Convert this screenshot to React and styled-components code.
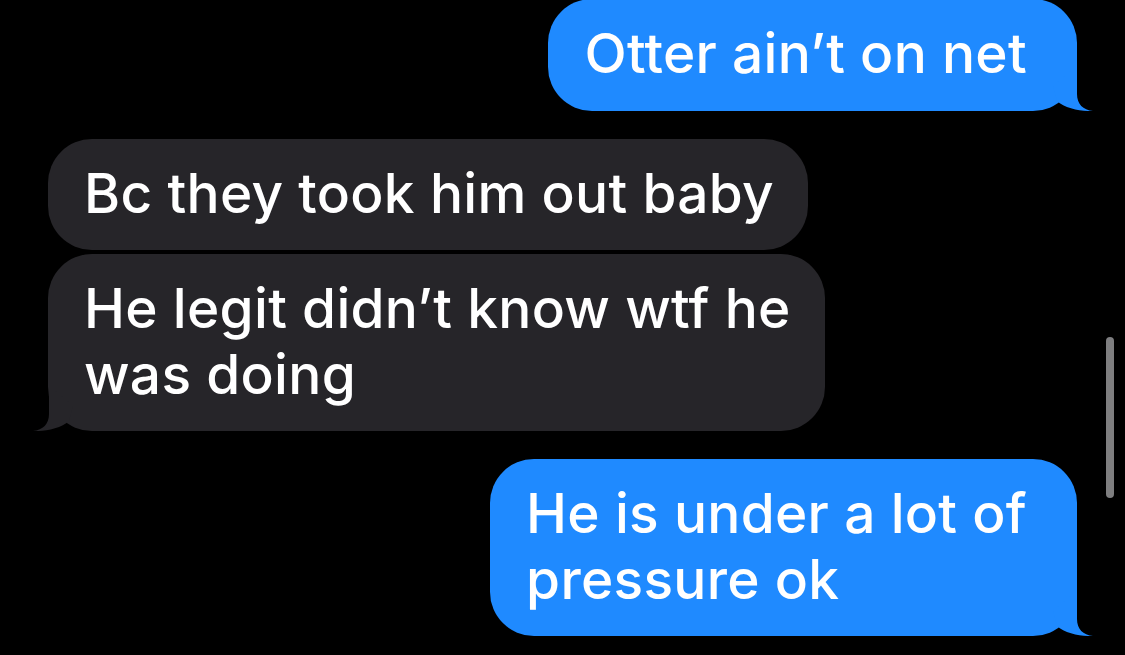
import React from 'react';
import styled, { createGlobalStyle } from 'styled-components';

const GlobalStyle = createGlobalStyle`
  html, body {
    margin: 0;
    padding: 0;
    background: #000;
  }
  body {
    font-family: Inter, "Noto Sans", "Liberation Sans", sans-serif;
    -webkit-font-smoothing: antialiased;
  }
`;

const Screen = styled.div`
  position: relative;
  width: 1125px;
  height: 655px;
  overflow: hidden;
  background: #000;
`;

const Thread = styled.div`
  display: flex;
  flex-direction: column;
  margin-top: -1px;
  padding: 0 48px;
`;

const Row = styled.div`
  display: flex;
  justify-content: ${(p) => (p.$sent ? 'flex-end' : 'flex-start')};
  margin-top: ${(p) => p.$gap || 0}px;
`;

const Bubble = styled.div`
  position: relative;
  background: ${(p) => (p.$sent ? '#1f8aff' : '#262529')};
  color: #fff;
  font-size: 55px;
  font-weight: 500;
  line-height: 65.5px;
  letter-spacing: 0.3px;
  padding: ${(p) => (p.$sent ? '22px 50px 24px 36px' : '22px 34px 24px 36px')};
  border-radius: 44px;
  white-space: nowrap;
`;

const Tail = styled.svg`
  position: absolute;
  bottom: 0;
  width: 40px;
  height: 45px;
  ${(p) => (p.$sent ? 'right: -16px;' : 'left: -15px; transform: scaleX(-1);')}
`;

const ScrollThumb = styled.div`
  position: absolute;
  right: 11px;
  top: 337px;
  width: 8px;
  height: 161px;
  border-radius: 4px;
  background: #7e7e80;
`;

const messages = [
  { sent: true, gap: 0, lines: ['Otter ain\u2019t on net'], tail: true },
  { sent: false, gap: 28, lines: ['Bc they took him out baby'] },
  { sent: false, gap: 4, lines: ['He legit didn\u2019t know wtf he', 'was doing'], tail: true },
  { sent: true, gap: 28, lines: ['He is under a lot of', 'pressure ok'], tail: true },
];

function BubbleTail({ sent }) {
  return (
    <Tail $sent={sent} viewBox="0 0 40 45">
      <path
        d="M24 0 L24 28 C24 38 30 44 40 45 C30 45.5 12 43 4 35 L0 20 Z"
        fill={sent ? '#1f8aff' : '#262529'}
      />
    </Tail>
  );
}

export default function App() {
  return (
    <Screen>
      <GlobalStyle />
      <Thread>
        {messages.map((m, i) => (
          <Row key={i} $sent={m.sent} $gap={m.gap}>
            <Bubble $sent={m.sent}>
              {m.lines.map((line, j) => (
                <React.Fragment key={j}>
                  {j > 0 && <br />}
                  {line}
                </React.Fragment>
              ))}
              {m.tail && <BubbleTail sent={m.sent} />}
            </Bubble>
          </Row>
        ))}
      </Thread>
      <ScrollThumb />
    </Screen>
  );
}
